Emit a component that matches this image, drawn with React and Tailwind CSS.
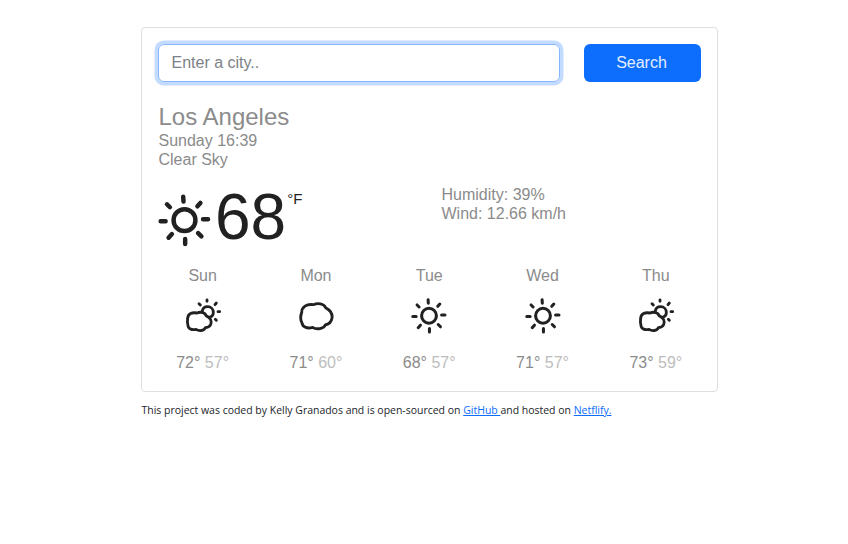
function Sun({ className }) {
  return (
    <svg viewBox="24 43 160 160" className={className} fill="none" stroke="#212121" strokeLinecap="round" strokeWidth="13.5">
      <circle cx="104" cy="122" r="33" />
      <path d="M100 51L101 66M152 70L143 80M160 119H175M145 161L155 171M106 179V194M66 164L56 175M32 125H47M51 74L60 83" />
    </svg>
  );
}

function Cloud({ className }) {
  return (
    <svg viewBox="386 112 108 108" className={className} fill="none" stroke="#212121" strokeLinejoin="round" strokeWidth="8.5">
      <path d="M432 132C445 126 464 128 469 141C482 148 490 159 488 172C486 185 477 191 468 193C464 204 442 208 430 200C415 205 400 200 398 187C392 178 394 163 397 156C397 139 412 129 432 132Z" />
    </svg>
  );
}

function PartlyCloudy({ className }) {
  return (
    <svg viewBox="46 111 108 108" className={className} overflow="visible" fill="none" stroke="#212121" strokeLinecap="round" strokeLinejoin="round" strokeWidth="8.5">
      <path d="M82 156C94 151 107 155 109 164C123 170 127 181 123 191C119 198 114 200 107 200C103 210 88 211 79 205C67 208 56 204 55 194C52 184 53 178 54 172C55 158 67 153 82 156Z" />
      <path d="M98 150C99 142 106 137 114 137C124 137 131 145 131 154C131 162 126 168 118 169" />
      <path d="M112 117V121M140 126L136 131M145 152H150M137 175L140 178M88 128L92 132" />
    </svg>
  );
}

const days = [
  { name: "Sun", Icon: PartlyCloudy, max: 72, min: 57 },
  { name: "Mon", Icon: Cloud, max: 71, min: 60 },
  { name: "Tue", Icon: Sun, max: 68, min: 57 },
  { name: "Wed", Icon: Sun, max: 71, min: 57 },
  { name: "Thu", Icon: PartlyCloudy, max: 73, min: 59 },
];

export default function App() {
  return (
    <div className="h-[544px] overflow-hidden bg-white pl-[141px] pt-[27px] font-['Liberation_Sans',Arial,sans-serif] text-base leading-[19px] text-[#8b8b8b]">
      <main className="h-[365px] w-[577px] rounded-[4px] border border-[#dfdfdf] px-4 pt-4">
        <form className="flex gap-6" onSubmit={(e) => e.preventDefault()}>
          <input
            type="search"
            placeholder="Enter a city.."
            className="h-[38px] w-[402px] rounded-md border border-[#86b7fe] pl-[12.5px] pr-3 shadow-[0_0_0_3.5px_#c2dbff] outline-none placeholder:text-[#7c8287]"
          />
          <button className="-ml-[0.5px] h-[38px] w-[117px] rounded-md bg-[#0d6efd] pb-0.5 pr-px text-[#e4efff]">Search</button>
        </form>
        <h1 className="mt-5 pl-[0.5px] text-2xl leading-[29px]">Los Angeles</h1>
        <p className="pl-[0.5px]">Sunday 16:39</p>
        <p className="pl-[0.5px]">Clear Sky</p>
        <div className="mt-4 flex h-[64px]">
          <div className="flex w-[283.5px] text-[#212121]">
            <Sun className="mt-[9px] h-[53px] w-[53px]" />
            <span className="ml-[4px] text-[64px] leading-[64px]">68</span>
            <span className="ml-px mt-[4px] text-[15px]">°F</span>
          </div>
          <div>
            <p>Humidity: 39%</p>
            <p>Wind: 12.66 km/h</p>
          </div>
        </div>
        <div className="-ml-3 -mr-[11.5px] mt-[17px] grid grid-cols-5">
          {days.map(({ name, Icon, max, min }) => (
            <div key={name} className="flex flex-col items-center">
              <span>{name}</span>
              <Icon className="mt-[13px] h-9 w-9" />
              <span className="mt-[19px]">
                {max}° <span className="text-[#bdbdbd]">{min}°</span>
              </span>
            </div>
          ))}
        </div>
      </main>
      <footer className="mt-[10px] whitespace-nowrap pl-[0.5px] font-['Open_Sans',sans-serif] text-[10.48px] leading-4 text-[#212529]">
        This project was coded by Kelly Granados and is open-sourced on{" "}
        <a className="whitespace-pre text-[#0d6efd] underline">GitHub </a>
        and hosted on <a className="text-[#0d6efd] underline">Netflify.</a>
      </footer>
    </div>
  );
}
